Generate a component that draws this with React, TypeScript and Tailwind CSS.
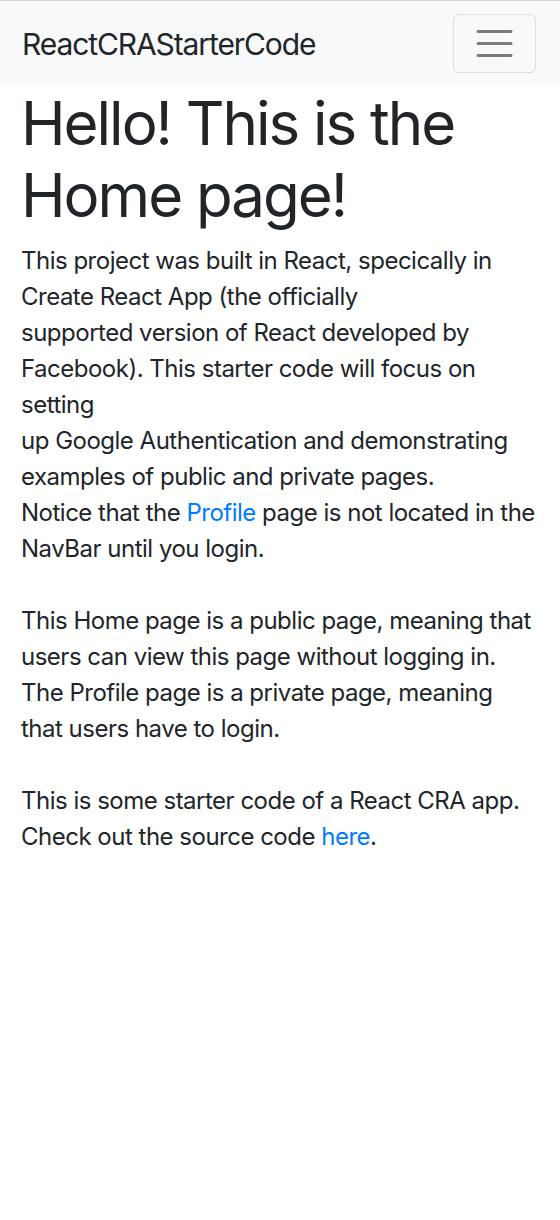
import React from "react"

// ─── Navbar ───────────────────────────────────────────────────────────────────

function NavBar() {
  return (
    <nav className="flex items-center justify-between border-t border-[#d6d6d6] bg-[#f8f9fa] pl-[22px] pr-[24px] pt-[13px] pb-[12px]">
      <a href="#" className="pt-[2px] text-[30px] leading-[45px] text-[#212529] tracking-[-1.1px]">
        ReactCRAStarterCode
      </a>
      <button
        type="button"
        aria-label="Toggle navigation"
        className="flex h-[59px] w-[83px] items-center justify-center rounded-[6px] border border-[#dcdddf]"
      >
        <svg width="45" height="45" viewBox="0 0 30 30">
          <path
            d="M4 7h22M4 15h22M4 23h22"
            stroke="rgba(0,0,0,0.5)"
            strokeWidth="2"
            strokeLinecap="round"
          />
        </svg>
      </button>
    </nav>
  )
}

// ─── Page ─────────────────────────────────────────────────────────────────────

const linkCls = "text-[#007bff]"

export default function App() {
  return (
    <div
      className="min-h-[1220px] bg-white text-[#212529]"
      style={{ fontFamily: "Inter, 'Noto Sans', sans-serif" }}
    >
      <NavBar />
      <main className="px-[21px] pt-[2px]">
        <h1 className="mb-3 text-[60px] font-normal leading-[72px] tracking-[-2px]">
          Hello! This is the
          <br />
          Home page!
        </h1>
        <p className="text-[24px] leading-[36px] tracking-[-0.5px]">
          This project was built in React, specically in
          <br />
          Create React App (the officially
          <br />
          supported version of React developed by
          <br />
          Facebook). This starter code will focus on
          <br />
          setting
          <br />
          up Google Authentication and demonstrating
          <br />
          examples of public and private pages.
          <br />
          Notice that the <a href="#" className={linkCls}>Profile</a> page is not located in the
          <br />
          NavBar until you login.
          <br />
          <br />
          This Home page is a public page, meaning that
          <br />
          users can view this page without logging in.
          <br />
          The Profile page is a private page, meaning
          <br />
          that users have to login.
          <br />
          <br />
          This is some starter code of a React CRA app.
          <br />
          Check out the source code <a href="#" className={linkCls}>here</a>.
        </p>
      </main>
    </div>
  )
}
